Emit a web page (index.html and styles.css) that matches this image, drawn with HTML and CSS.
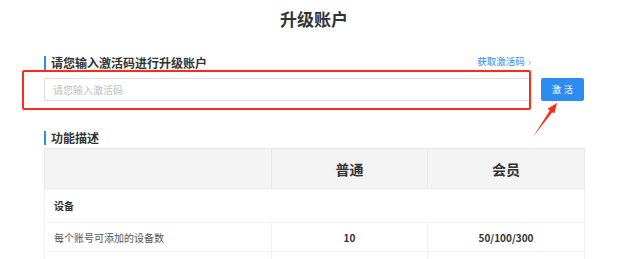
FILE: index.html
```html
<html>
  <head>
    <meta charset="utf-8" />
    <title>升级账户</title>
    <link rel="stylesheet" href="styles.css">
  </head>
  <body>
    <div id="page">
      <h1 class="title">升级账户</h1>

      <div class="head_row">
        <div class="section_title">请您输入激活码进行升级账户</div>
        <a class="get_code" href="#">获取激活码 <span class="chev">&#8250;</span></a>
      </div>
      <div class="input_row">
        <input class="code_input" type="text" placeholder="请您输入激活码" />
        <button class="btn_active">激活</button>
      </div>

      <div class="section_title second">功能描述</div>
      <table class="feature_table">
        <colgroup>
          <col class="c1" />
          <col class="c2" />
          <col class="c3" />
        </colgroup>
        <tr class="t_head">
          <th></th>
          <th>普通</th>
          <th>会员</th>
        </tr>
        <tr class="t_group">
          <td colspan="3">设备</td>
        </tr>
        <tr class="t_row">
          <td>每个账号可添加的设备数</td>
          <td class="num">10</td>
          <td class="num">50/100/300</td>
        </tr>
        <tr class="t_row">
          <td>&nbsp;</td>
          <td class="num"></td>
          <td class="num"></td>
        </tr>
      </table>

      <!-- annotation marks -->
      <div id="mark_box"></div>
      <svg id="mark_arrow" width="34" height="40" viewBox="0 0 34 40">
        <polygon points="29,3 26.3,13.6 24.2,12.2 5,37 21.8,10.4 19.6,8.8" fill="#ff2a1a" />
      </svg>
    </div>
  </body>
</html>
```

FILE: styles.css
```css
body {
  margin: 0;
  background: #ffffff;
  font-family: "Noto Sans CJK SC", "Noto Sans", sans-serif;
  color: #333333;
}

#page {
  width: 540px;
  margin-left: 44px;
  padding-top: 8px;
}

.title {
  margin: 0;
  font-size: 17px;
  line-height: 22px;
  font-weight: bold;
  text-align: center;
  color: #333333;
}

.head_row {
  margin-top: 26px;
  width: 486px;
  height: 14px;
  display: flex;
  justify-content: space-between;
  align-items: center;
}

.section_title {
  font-size: 12px;
  line-height: 14px;
  height: 14px;
  font-weight: bold;
  color: #333333;
  border-left: 2px solid #2d8cf0;
  padding-left: 5px;
  display: flex;
  align-items: center;
}

.section_title.second {
  margin-top: 30px;
}

.get_code {
  font-size: 9.5px;
  line-height: 12px;
  height: 12px;
  color: #2d8cf0;
  text-decoration: none;
  margin-bottom: 4px;
  margin-right: -1px;
  display: flex;
  align-items: center;
  gap: 3px;
}

.chev {
  color: #8aa6c8;
  font-size: 11px;
  line-height: 12px;
}

.input_row {
  margin-top: 8px;
  display: flex;
  gap: 11px;
  height: 23px;
}

.code_input {
  width: 486px;
  height: 23px;
  box-sizing: border-box;
  border: 1px solid #dcdcdc;
  border-radius: 2px;
  padding: 0 8px;
  font-family: inherit;
  font-size: 10px;
  outline: none;
}

.code_input::placeholder {
  color: #c0c0c0;
}

.btn_active {
  width: 43px;
  height: 23px;
  border: none;
  border-radius: 2px;
  background: #2d8cf0;
  color: #ffffff;
  font-family: inherit;
  font-size: 9px;
  letter-spacing: 3px;
  padding: 0 0 0 3px;
}

.feature_table {
  margin-top: 3px;
  width: 540px;
  border-collapse: collapse;
  table-layout: fixed;
}

.c1 {
  width: 227px;
}
.c2 {
  width: 156px;
}
.c3 {
  width: 157px;
}

.feature_table th,
.feature_table td {
  border: 1px solid #eeeeee;
  padding: 0 9px;
}

.t_head th {
  height: 40px;
  background: #f4f4f4;
  font-size: 14px;
  font-weight: bold;
  color: #333333;
  text-align: center;
  border-color: #e9e9e9;
}

.t_group td {
  height: 34px;
  font-size: 10px;
  font-weight: bold;
  color: #333333;
  border-color: #f2f2f2;
}

.t_row td {
  height: 29px;
  font-size: 10px;
  color: #555555;
  border-color: #f2f2f2;
}

.t_row td.num {
  text-align: center;
  font-weight: bold;
  color: #333333;
}

#mark_box {
  position: absolute;
  left: 22px;
  top: 70px;
  width: 505px;
  height: 36px;
  border: 2px solid #ff2a1a;
  border-radius: 2px;
}

#mark_arrow {
  position: absolute;
  left: 528px;
  top: 100px;
}
```
